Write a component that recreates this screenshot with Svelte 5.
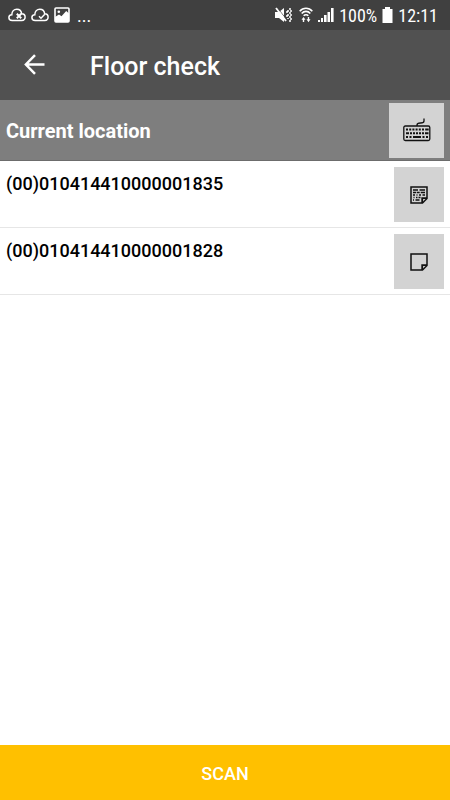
<script>
	let location = 'Current location';

	let items = [
		{ code: '(00)010414410000001835', hasNote: true },
		{ code: '(00)010414410000001828', hasNote: false }
	];
</script>

<div class="screen">
	<div class="status">
		<div class="group left">
			<svg width="18" height="14" viewBox="0 0 18 14" fill="none" stroke="#fff" stroke-width="1.5">
				<path d="M9 12.5H4.2C2.2 12.5.9 11.2.9 9.5S2.2 6.8 3.8 6.7C3.8 3.500 6 1.2 8.8 1.2s4.6 1.9 4.9 4.6c2 .1 3.4 1.500 3.4 3.3 0 2-1.4 3.4-3.4 3.4z" />
				<path d="M8.8 5.8l4.4 4.4M13.2 5.8l-4.4 4.4" stroke-width="2" />
			</svg>
			<svg width="18" height="14" viewBox="0 0 18 14" fill="none" stroke="#fff" stroke-width="1.5">
				<path d="M9 12.5H4.2C2.2 12.5.9 11.2.9 9.5S2.2 6.8 3.8 6.7C3.8 3.500 6 1.2 8.8 1.2s4.6 1.9 4.9 4.6c2 .1 3.4 1.500 3.4 3.3 0 2-1.4 3.4-3.4 3.4z" />
				<path d="M8 8.2l2 2 3.8-4" />
			</svg>
			<svg width="16" height="16" viewBox="0 0 16 16">
				<rect x="1" y="1" width="14" height="14" rx="1" fill="none" stroke="#fff" stroke-width="1.6" />
				<circle cx="4.8" cy="4.8" r="1.3" fill="#fff" />
				<path d="M1 10l4-2.600 2.500 1.800L12.2 4 15 6.500V15H1z" fill="#fff" />
			</svg>
			<span class="more">...</span>
		</div>
		<div class="group right">
			<svg class="mute" width="17" height="16" viewBox="0 0 17 16">
				<path d="M0 5h4l5-4v14l-5-4H0z" fill="#fff" />
				<path d="M2 .4l9.500 12" stroke="#404040" stroke-width=".8" />
				<path d="M1 1l10 13" stroke="#fff" stroke-width="1.800" />
				<path d="M12 4v2M12 8v2M13 3v2M13 7v2M13 11v1M15 1v2M16 3v2M15 5v2M16 7v2M15 9v2M16 11v2M15 13v2" stroke="#fff" stroke-width="1.500" />
			</svg>
			<svg width="14" height="16" viewBox="0 0 14 16" fill="none" stroke="#fff" stroke-width="1.6">
				<path d="M.7 4.2C4.2.2 9.8.2 13.3 4.2M2.7 6.500c2.4-2.800 6.200-2.800 8.600 0M4.7 8.800c1.300-1.500 3.300-1.500 4.600 0" />
				<path d="M2.500 12.800h4L4.500 10zM7.500 12.200h4l-2 3z" fill="#fff" stroke="none" />
				<path d="M4.500 12v3M9.500 10v3" stroke-width="1.4" />
			</svg>
			<svg width="16" height="16" viewBox="0 0 16 16" fill="#fff">
				<path d="M0 13h2v2H0zM3 11h2v4H3zM6 8h2.600v7H6zM9.500 5H12v10H9.500zM13 1h2.600v14H13z" />
			</svg>
			<span>100%</span>
			<svg width="11" height="16" viewBox="0 0 11 16" fill="#fff">
				<path d="M3 0h5v2h2.500v14H.5V2H3z" />
			</svg>
			<span>12:11</span>
		</div>
	</div>

	<header>
		<button class="back" type="button" aria-label="Back">
			<svg width="22" height="22" viewBox="0 0 22 22" fill="none" stroke="#fff" stroke-width="2.500">
				<path d="M20.500 10.500H2.500M11 1.200L1.900 10.500 11 19.800" />
			</svg>
		</button>
		<h1>Floor check</h1>
	</header>

	<section class="location">
		<h2>{location}</h2>
		<button class="tile wide" type="button" aria-label="Enter location">
			<svg width="28" height="24" viewBox="0 0 28 24" fill="none" stroke="#111">
				<rect x=".8" y="8" width="26" height="14.500" rx="1.500" stroke-width="1.300" />
				<path d="M14 8V7c0-2 1.500-2 3.500-2S21 4.500 21 3V.5" stroke-width="1.300" />
				<path d="M3 11.500h2m1.200 0h2m1.200 0h2m1.200 0h2m1.200 0h2m1.200 0h2m1.200 0h3.500" stroke-width="2" />
				<path d="M3 15.200h3m1 0h2m1 0h2m1 0h2m1 0h2m1 0h2m1 0h3.500" stroke-width="2" />
				<path d="M3 19h2m1.500 0h2m1.500 0h8m1.500 0h2m1.500 0h2" stroke-width="2" />
			</svg>
		</button>
	</section>

	<ul>
		{#each items as item}
			<li>
				<span class="code">{item.code}</span>
				<button class="tile" type="button" aria-label={item.hasNote ? 'Edit note' : 'Add note'}>
					<svg width="18" height="18" viewBox="0 0 18 18" fill="none" stroke="#111" stroke-width="1.500">
						<path d="M1 1h16v11.500L12.500 17H1z" />
						<path d="M12.200 17v-4.800H17" stroke-width="1.800" />
						{#if item.hasNote}
							<path d="M3 4h5m1.500 0H15M3 6.500h3m.7 0h3m1 0H15M3 9h2m1.500 0h1m1.500 0h2m1.500 0H15M3.500 11.500h1m1.500 0h1.500m1 0h2M3 14h1m1.500 0h4" stroke-width="1.400" />
						{/if}
					</svg>
				</button>
			</li>
		{/each}
	</ul>

	<button class="scan" type="button">SCAN</button>
</div>

<style>
	:global(body) {
		margin: 0;
		background: #fff;
	}

	.screen {
		min-height: 100vh;
		display: flex;
		flex-direction: column;
		font-family: Roboto, "Liberation Sans", sans-serif;
		color: #000;
	}

	button {
		border: 0;
		padding: 0;
		font-family: inherit;
		cursor: pointer;
	}

	svg {
		display: block;
		flex: none;
	}

	.status {
		height: 30px;
		padding: 0 12px 0 8px;
		display: flex;
		align-items: center;
		justify-content: space-between;
		background: #404040;
		color: #fff;
		font-size: 18px;
	}

	.group {
		display: flex;
		align-items: center;
		gap: 5px;
	}

	.more {
		margin-left: 2px;
	}

	.right {
		font-family: "Roboto Condensed", Roboto, sans-serif;
	}

	.mute {
		margin-right: 2px;
	}

	header {
		height: 70px;
		display: flex;
		align-items: center;
		background: #515151;
		color: #fff;
	}

	.back {
		width: 70px;
		height: 70px;
		display: flex;
		align-items: center;
		justify-content: center;
		background: none;
	}

	h1 {
		margin: 0 0 0 20px;
		padding-top: 2px;
		font-size: 25px;
		font-weight: 500;
	}

	.location {
		height: 61px;
		box-sizing: border-box;
		padding: 0 6px;
		display: flex;
		align-items: center;
		justify-content: space-between;
		background: #7e7e7e;
		border-bottom: 1px solid #6c6c6c;
		color: #fff;
	}

	h2 {
		margin: 0;
		padding-top: 2px;
		font-size: 20px;
		font-weight: 700;
	}

	.tile {
		width: 50px;
		height: 55px;
		display: flex;
		align-items: center;
		justify-content: center;
		background: #d3d3d3;
	}

	.tile.wide {
		width: 55px;
	}

	ul {
		flex: 1;
		margin: 0;
		padding: 0;
		list-style: none;
	}

	li {
		padding: 6px 6px 5px;
		display: flex;
		justify-content: space-between;
		border-bottom: 1px solid #e6e6e6;
	}

	.code {
		padding-top: 6px;
		font-size: 18px;
		line-height: 22px;
		font-weight: 500;
	}

	.scan {
		height: 55px;
		padding-top: 2px;
		background: #ffc000;
		color: #fff;
		font-size: 18px;
		font-weight: 500;
	}
</style>
